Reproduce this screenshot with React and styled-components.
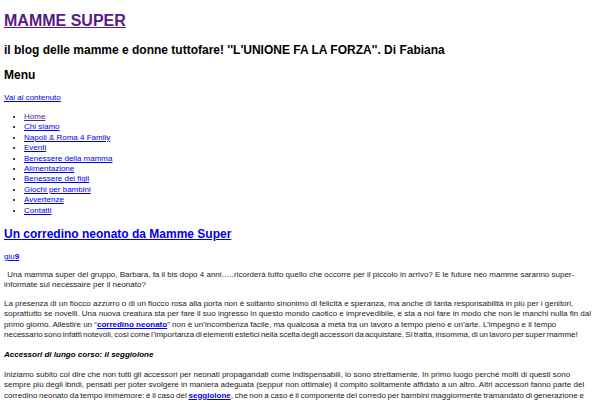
import React from "react";
import styled, { createGlobalStyle } from "styled-components";

const GlobalStyle = createGlobalStyle`
  html, body {
    background: #ffffff;
  }
  body {
    margin: 4px;
    font-family: "Liberation Sans", Arial, sans-serif;
    font-size: 8px;
    color: #000;
  }
`;

const Header = styled.header`
  display: flex;
  flex-direction: column;
`;

const SiteTitle = styled.h1`
  margin: 8px 0 0;
  font-size: 16px;
  line-height: 18px;
  font-weight: bold;
`;

const Link = styled.a`
  color: ${(p) => (p.$visited ? "#551a8b" : "#0000ee")};
  text-decoration: underline;
  font-weight: ${(p) => (p.$bold ? "bold" : "inherit")};
`;

const Tagline = styled.h2`
  margin: 13px 0 0;
  font-size: 12px;
  line-height: 14px;
  font-weight: bold;
`;

const NavTitle = styled.h2`
  margin: 11px 0 0;
  font-size: 12px;
  line-height: 14px;
  font-weight: bold;
`;

const SkipLink = styled.div`
  margin-top: 11px;
  line-height: 10px;
`;

const MenuList = styled.ul`
  margin: 9px 0 0;
  padding-left: 20px;
  line-height: 10.4px;
  list-style: disc;
`;

const Main = styled.main`
  display: flex;
  flex-direction: column;
`;

const PostTitle = styled.h2`
  margin: 11px 0 0;
  font-size: 12px;
  line-height: 14px;
  font-weight: bold;
`;

const Meta = styled.div`
  margin-top: 11px;
  line-height: 10px;
`;

const Para = styled.p`
  margin: ${(p) => p.$top ?? 8}px 0 0;
  line-height: 10.4px;
  color: #222;
`;

const Tight = styled.span`
  word-spacing: ${(p) => p.$ws}px;
`;

const SubHead = styled.h4`
  margin: 9px 0 0;
  font-size: 8px;
  line-height: 10.4px;
  font-weight: bold;
  font-style: italic;
`;

const Dot = styled.span`
  color: #aaa;
  margin-right: 1px;
`;

const menu = [
  "Home",
  "Chi siamo",
  "Napoli & Roma 4 Family",
  "Eventi",
  "Benessere della mamma",
  "Alimentazione",
  "Benessere dei figli",
  "Giochi per bambini",
  "Avvertenze",
  "Contatti",
];

export default function App() {
  return (
    <>
      <GlobalStyle />
      <Header>
        <SiteTitle>
          <Link href="#" $visited>
            MAMME SUPER
          </Link>
        </SiteTitle>
        <Tagline>
          il blog delle mamme e donne tuttofare! ''L'UNIONE FA LA FORZA''. Di
          Fabiana
        </Tagline>
        <NavTitle>Menu</NavTitle>
        <SkipLink>
          <Link href="#">Vai al contenuto</Link>
        </SkipLink>
        <MenuList>
          {menu.map((item, i) => (
            <li key={item}>
              <Link href="#" $visited={i === 0}>
                {item}
              </Link>
            </li>
          ))}
        </MenuList>
      </Header>
      <Main>
        <PostTitle>
          <Link href="#">Un corredino neonato da Mamme Super</Link>
        </PostTitle>
        <Meta>
          <Link href="#">
            giu<b>9</b>
          </Link>
        </Meta>
        <Para $top={8}>
          <Dot>.</Dot>Una mamma super del gruppo, Barbara, fa il bis dopo 4
          anni…..ricorderà tutto quello che occorre per il piccolo in arrivo? E
          le future neo mamme saranno super-informate sul necessaire per il
          neonato?
        </Para>
        <Para>
          La presenza di un fiocco azzurro o di un fiocco rosa alla porta non è
          soltanto sinonimo di felicità e speranza, ma anche di tanta
          responsabilità in più per i genitori, soprattutto se novelli. Una
          nuova creatura sta per fare il suo ingresso in questo mondo caotico e
          imprevedibile, e sta a noi fare in modo che non le manchi nulla fin
          dal primo giorno. Allestire un “
          <Link href="#" $bold>
            corredino neonato
          </Link>
          ” non è un’incombenza facile, ma qualcosa a metà tra un lavoro a
          tempo pieno e un’arte. L’impegno e il tempo{" "}
          <Tight $ws={-0.9}>
            necessario sono infatti notevoli, così come l’importanza di
            elementi estetici nella scelta degli accessori da acquistare. Si
            tratta, insomma, di un lavoro per super mamme!
          </Tight>
        </Para>
        <SubHead>Accessori di lungo corso: il seggiolone</SubHead>
        <Para $top={10}>
          Iniziamo subito col dire che non tutti gli accessori per neonati
          propagandati come indispensabili, lo sono strettamente. In primo
          luogo perché molti di questi sono sempre più degli ibridi, pensati
          per poter svolgere in maniera adeguata (seppur non ottimale) il
          compito solitamente affidato a un altro. Altri accessori fanno parte
          del{" "}
          <Tight $ws={-0.5}>
            corredino neonato da tempo immemore: è il caso del{" "}
            <Link href="#" $bold>
              seggiolone
            </Link>
            , che non a caso è il componente del corredo per bambini
            maggiormente tramandato di generazione e
          </Tight>{" "}
          generazione.
        </Para>
      </Main>
    </>
  );
}
